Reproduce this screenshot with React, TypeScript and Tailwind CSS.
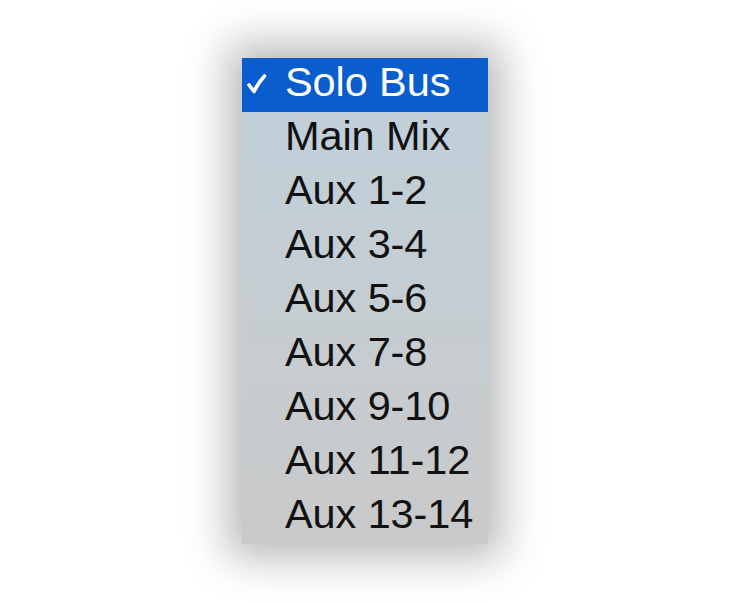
const items = ['Solo Bus', 'Main Mix', 'Aux 1-2', 'Aux 3-4', 'Aux 5-6', 'Aux 7-8', 'Aux 9-10', 'Aux 11-12', 'Aux 13-14'];

function CheckMark() {
  return (
    <svg width="20" height="20" viewBox="0 0 20 20" fill="none" stroke="currentColor" strokeLinecap="round" strokeLinejoin="round">
      <path d="M2 11 L7 17.5 Q11 9 17.5 2" strokeWidth="3.6" />
    </svg>
  );
}

export default function App() {
  return (
    <div className="w-[730px] h-[603px] bg-white flex justify-center pt-[58px] font-['Liberation_Sans',Arial,sans-serif]">
      {/* Popup menu */}
      <div className="w-[246px] h-[486px] flex flex-col bg-gradient-to-b from-[#bfd0db] via-[#c5cdd2] to-[#c9c9c9] shadow-[0_0_40px_14px_rgba(0,0,0,0.28)]">
        {items.map((label, i) => (
          <div
            key={label}
            className={
              i === 0
                ? 'h-[54px] flex items-center bg-[#0a5dcc] text-white'
                : 'h-[54px] flex items-center text-[#111]'
            }
          >
            <div className="w-[43px] pl-[5px] pb-[5px] pt-[2px] flex">
              {i === 0 && <CheckMark />}
            </div>
            <span className="text-[41.5px] leading-none pb-[7px] tracking-[-0.1px]">{label}</span>
          </div>
        ))}
      </div>
    </div>
  );
}
